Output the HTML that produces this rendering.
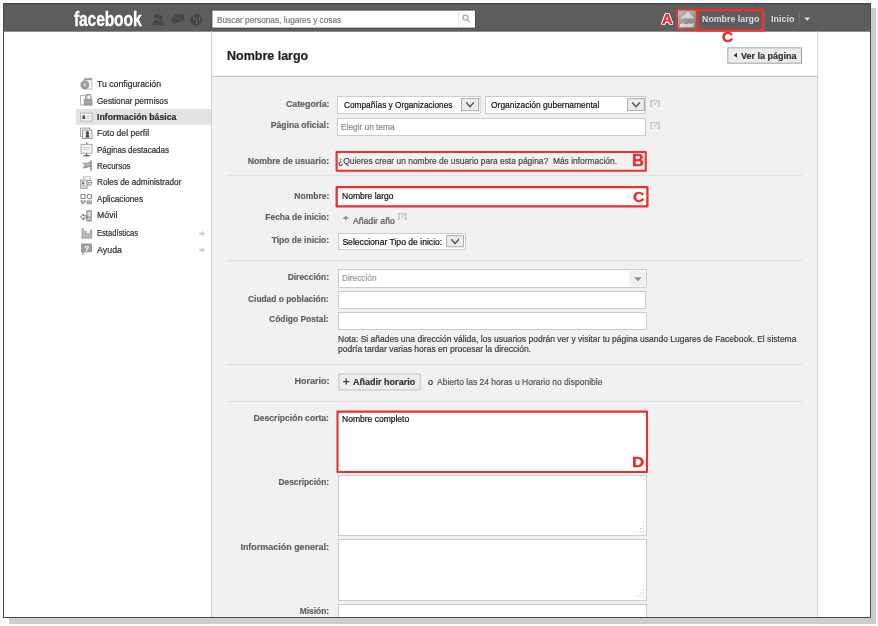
<!DOCTYPE html>
<html lang="es">
<head>
<meta charset="utf-8">
<title>Nombre largo - Información básica</title>
<style>
html,body{margin:0;padding:0;}
body{width:878px;height:626px;overflow:hidden;background:#fbfbfb;position:relative;font-family:"Liberation Sans",sans-serif;}
#shadow{position:absolute;left:9px;top:8px;width:867px;height:616px;background:#cdcdcb;}
#frame{position:absolute;left:3px;top:3px;width:866px;height:613px;border:1px solid #4b4b4b;background:#fff;overflow:hidden;}
#page{position:absolute;left:-4px;top:-4px;width:878px;height:626px;will-change:transform;}
#shapes{position:absolute;left:0;top:0;}
.t{position:absolute;white-space:pre;line-height:12px;height:12px;font-family:"Liberation Sans",sans-serif;-webkit-text-stroke:0.2px currentColor;}
#logo{position:absolute;left:74.4px;top:4.6px;font-weight:bold;color:#fff;font-size:20.8px;line-height:28px;height:28px;white-space:pre;letter-spacing:-0.2px;-webkit-text-stroke:0.35px #fff;transform-origin:0 50%;transform:scaleX(0.752);}
.ann{position:absolute;white-space:pre;font-weight:bold;color:#e62c2c;font-family:"Liberation Sans",sans-serif;transform-origin:0 50%;}
</style>
</head>
<body>
<div id="shadow"></div>
<div id="frame"><div id="page">
<svg id="shapes" width="878" height="626" viewBox="0 0 878 626">
<!-- top bar -->
<rect x="4" y="4" width="867" height="27.7" fill="#5d5d5d"/>
<rect x="4" y="4" width="867" height="1" fill="#565656"/>
<!-- content column -->
<rect x="212" y="76.6" width="606" height="545" fill="#f1f1f1"/>
<rect x="211" y="31.4" width="1" height="590" fill="#cfcfcf"/>
<rect x="817.2" y="31.4" width="1" height="590" fill="#cfcfcf"/>
<rect x="212" y="75.8" width="606" height="1" fill="#bcbcbc"/>
<!-- nav selected -->
<rect x="75.6" y="109" width="135.4" height="15.8" fill="#e3e3e3"/>
<!-- search box -->
<rect x="211.6" y="9.6" width="264.2" height="18.8" fill="#4a4a4a"/>
<rect x="212.4" y="10.6" width="262.6" height="17" fill="#fff"/>
<rect x="458" y="12" width="0.8" height="14" fill="#e3e3e3"/>
<g fill="none" stroke="#a8a8a8" stroke-width="1.3"><circle cx="465.4" cy="17.6" r="2.5"/><path d="M467.3 19.6 L469.8 22"/></g>
<!-- bar dividers -->
<rect x="764.4" y="12" width="0.8" height="14" fill="#727272"/>
<rect x="799" y="12" width="0.8" height="14" fill="#727272"/>
<path d="M804.4 17.6 h5.6 l-2.8 3.1z" fill="#e8e8e8"/>
<!-- jewels -->
<g fill="#454545">
<circle cx="160.500" cy="17.500" r="2.300"/>
<path d="M157.600 25.500 l.8-3.200 q.4-1.700 2.100-2 q1.700.3 2.200 1.600 l1.600 3.600z"/>
<circle cx="156.500" cy="16.400" r="2.700" stroke="#5d5d5d" stroke-width="0.5"/>
<path d="M151.300 25.500 l1.700-3.800 q.8-1.500 3.500-1.800 q2.600.3 3.300 1.800 l1.600 3.800z" stroke="#5d5d5d" stroke-width="0.5"/>
<path d="M174.400 14.200 h9.800 v6.300 h-1.600 l.2 1.800 l-2-1.800 h-6.400z"/>
<path d="M171.200 17.300 h8.900 v5.400 h-4.300 l-2.300 2.600 l.2-2.600 h-2.500z" stroke="#5d5d5d" stroke-width="0.7"/>
<circle cx="196.100" cy="19.800" r="5.800"/>
<path d="M194.600 14.900 q-1.800 2.600.4 4.300 q2.400 1.400 1.200 5" fill="none" stroke="#686868" stroke-width="1.100"/>
<path d="M199.200 16.600 q1.600 1.800.8 4.400 q-1.400-.8-1.600-2.400z" fill="#636363"/>
</g>
<!-- avatar -->
<defs><linearGradient id="avg" x1="0" y1="0" x2="0.6" y2="1"><stop offset="0" stop-color="#bcbcbc"/><stop offset="0.5" stop-color="#a2a2a2"/><stop offset="1" stop-color="#858585"/></linearGradient></defs>
<rect x="678" y="10.100" width="17.800" height="18.400" fill="url(#avg)"/>
<path d="M680 18.600 l8.300-7 l6.100 7z" fill="#d2d2d2"/>
<path d="M684 18.600 h10.400 l-1.600 1.800 l-7 6z" fill="#8e8e8e" opacity="0.6"/>
<!-- header button -->
<rect x="727.400" y="47.400" width="74.600" height="16.200" fill="#979797"/>
<rect x="728.300" y="48.300" width="72.800" height="14.400" fill="#ededed"/>
<path d="M737 52.800 v5 l-3.400-2.500z" fill="#333"/>
<!-- separators -->
<g fill="#dedede">
<rect x="227.400" y="174.800" width="574.600" height="1"/>
<rect x="227.400" y="260.200" width="574.600" height="1"/>
<rect x="227.400" y="364" width="574.600" height="1"/>
<rect x="227.400" y="401" width="574.600" height="1"/>
</g>
<!-- form boxes -->
<g fill="#fff" stroke="#c4c1bf" stroke-width="0.8">
<rect x="337.500" y="96.500" width="142.600" height="17"/>
<rect x="485.500" y="96.500" width="160" height="17"/>
<rect x="337.500" y="118.500" width="308" height="17"/>
<rect x="338.500" y="233.500" width="127" height="16"/>
<rect x="338.500" y="269.500" width="308" height="18"/>
<rect x="338.500" y="291.500" width="307.200" height="17"/>
<rect x="338.500" y="312.600" width="308" height="16.800"/>
<rect x="338.500" y="475.500" width="308" height="60"/>
<rect x="338.500" y="539.500" width="308" height="61"/>
<rect x="338.500" y="604.500" width="308" height="30"/>
</g>
<!-- dropdown buttons -->
<g fill="#ebebeb" stroke="#9c9c9c" stroke-width="0.8">
<rect x="461.500" y="98.500" width="17.200" height="12.200"/>
<rect x="627.500" y="98.700" width="17" height="11.900"/>
<rect x="446.700" y="235.700" width="16.700" height="11.100"/>
</g>
<g fill="none" stroke="#505050" stroke-width="1.400">
<path d="M466.200 102.400 l3.800 4.200 l3.800-4.200"/>
<path d="M632.200 102.500 l3.800 4.200 l3.800-4.200"/>
<path d="M451.300 239.200 l3.800 4.200 l3.800-4.200"/>
</g>
<!-- direccion typeahead button -->
<rect x="629" y="270.400" width="16.600" height="16" fill="#f0f0f0"/>
<path d="M634 277.200 h7.600 l-3.800 4z" fill="#8c8c8c"/>
<!-- añadir horario button -->
<rect x="338.400" y="373.600" width="82.200" height="16.800" fill="#bcbcbc"/>
<rect x="339.300" y="374.500" width="80.400" height="15" fill="#eeeeee"/>
<path d="M343 381.600 h6.400 M346.200 378.600 v6" stroke="#444" stroke-width="1.400" fill="none"/>
<!-- añadir año plus -->
<path d="M343.400 218 h5 M345.900 215.800 v4.400" stroke="#8a8a8a" stroke-width="1.400" fill="none"/>
<!-- textarea grips -->
<g fill="#c6c6c6"><rect x="642.6" y="525" width="1.2" height="1.2"/><rect x="640" y="528" width="1.2" height="1.2"/><rect x="642.6" y="528" width="1.2" height="1.2"/><rect x="636.6" y="531" width="1.2" height="1.2"/><rect x="639.6" y="531" width="1.2" height="1.2"/><rect x="642.6" y="531" width="1.2" height="1.2"/><rect x="642.6" y="589.5" width="1.2" height="1.2"/><rect x="640" y="592.5" width="1.2" height="1.2"/><rect x="642.6" y="592.5" width="1.2" height="1.2"/><rect x="636.6" y="595.5" width="1.2" height="1.2"/><rect x="639.6" y="595.5" width="1.2" height="1.2"/><rect x="642.6" y="595.5" width="1.2" height="1.2"/></g>
<!-- nav arrows -->
<g fill="#cfcfcf">
<path d="M199.400 232.400 h2.600 v-1.800 l3 3 l-3 3 v-1.800 h-2.600z"/>
<path d="M199.400 248.800 h2.600 v-1.800 l3 3 l-3 3 v-1.800 h-2.600z"/>
</g>

<!-- nav icons -->
<g>
<!-- 1 settings: page + gear -->
<rect x="84.500" y="78.600" width="7.400" height="10.400" fill="#fff" stroke="#b5b5b5" stroke-width="0.9"/>
<rect x="84.500" y="78.600" width="7.400" height="1.600" fill="#9a9a9a"/>
<path d="M83.200 80.600 l3.400 0 l2.600 2.500 l0 3.600 l-2.600 2.600 l-3.400 0 l-2.600-2.600 l0-3.600z" fill="#9b9b9b"/>
<circle cx="84.900" cy="84.900" r="1.700" fill="#d0d0d0"/>
<!-- 2 lock -->
<rect x="80.500" y="95.600" width="6.500" height="9.400" fill="#fff" stroke="#b0b0b0" stroke-width="0.9"/>
<path d="M85.600 99.200 v-2 a2.700 2.700 0 0 1 5.400 0 v2" fill="none" stroke="#9a9a9a" stroke-width="1.300"/>
<rect x="83.800" y="98.800" width="8.600" height="6.800" fill="#9c9c9c"/>
<rect x="84.600" y="101.600" width="7" height="0.8" fill="#c8c8c8"/>
<!-- 3 info card -->
<rect x="80.600" y="113.100" width="11.400" height="8" fill="#f7f7f7" stroke="#b0b0b0" stroke-width="0.9"/>
<rect x="82.400" y="115.400" width="2.800" height="3.600" fill="#555"/>
<rect x="86.400" y="116" width="4.200" height="0.8" fill="#c2c2c2"/>
<rect x="86.400" y="118" width="3.200" height="0.8" fill="#c2c2c2"/>
<!-- 4 photo -->
<rect x="80.600" y="128.100" width="9" height="8.400" fill="#fff" stroke="#9a9a9a" stroke-width="0.9"/>
<rect x="82.600" y="130.100" width="9.400" height="8.400" fill="#f4f4f4" stroke="#8e8e8e" stroke-width="0.9"/>
<path d="M85.600 137.400 v-1.600 l1-1 a1.700 1.900 0 1 1 1.600 0 l1 1 v1.600z" fill="#4a4a4a"/>
<!-- 5 board -->
<rect x="86" y="142.600" width="1.200" height="2" fill="#555"/>
<rect x="81" y="144.400" width="11" height="8.800" fill="#f6f6f6" stroke="#a8a8a8" stroke-width="0.9"/>
<rect x="82.800" y="147" width="7.400" height="0.8" fill="#c6c6c6"/>
<rect x="82.800" y="149" width="7.400" height="0.8" fill="#c6c6c6"/>
<rect x="86" y="153.400" width="1.200" height="2" fill="#555"/>
<rect x="83.400" y="155.200" width="6.400" height="1.100" fill="#444"/>
<!-- 6 flag -->
<path d="M90.600 161 L86.600 163.100 L82.400 162.300 L84.300 165.400 L82.400 168.500 L86.600 167.900 L90.600 166.700z" fill="#a0a0a0"/>
<path d="M90.400 162.600 L86.600 164.600 L84.200 164.200 L84.800 165.400 L86.600 165.600 L90.400 164.200z" fill="#c4c4c4"/>
<rect x="90.300" y="160.400" width="1.400" height="10.300" fill="#858585"/>
<!-- 7 roles -->
<rect x="83.500" y="176.900" width="6.400" height="8" fill="#fff" stroke="#b0b0b0" stroke-width="0.9"/>
<rect x="80.700" y="180.100" width="6.400" height="8.200" fill="#ececec" stroke="#949494" stroke-width="0.9"/>
<rect x="82" y="181.800" width="2.200" height="2.600" fill="#7a7a7a"/>
<rect x="82" y="185.600" width="3.800" height="0.8" fill="#9e9e9e"/>
<circle cx="89.300" cy="182.800" r="2.500" fill="#f4f4f4" stroke="#8a8a8a" stroke-width="1"/>
<rect x="88.100" y="182.300" width="2.400" height="1" fill="#6a6a6a"/>
<!-- 8 apps -->
<g fill="#fff" stroke="#8a8a8a" stroke-width="1.100">
<rect x="81" y="194.500" width="4" height="4"/>
<circle cx="89.400" cy="196.400" r="2.200"/>
<rect x="87.100" y="201.100" width="4.200" height="2.600"/>
<path d="M80.900 201 h4.400 l-2.200 2.900z"/>
</g>
<rect x="88.300" y="202" width="1.800" height="0.8" fill="#777"/>
<!-- 9 mobile -->
<rect x="86.400" y="210.200" width="5.400" height="11.200" fill="#939393"/>
<rect x="87.500" y="211.700" width="3.200" height="5" fill="#dedede"/>
<rect x="87.500" y="217.800" width="3.200" height="2.200" fill="#cfcfcf"/>
<path d="M80.500 217 l3-3 v1.900 h3.500 v2.200 h-3.500 v1.900z" fill="#fff" stroke="#5c5c5c" stroke-width="0.9"/>
<!-- 10 stats -->
<g fill="#a9a9a9"><rect x="81.600" y="228.200" width="2.300" height="9.600"/><rect x="84.400" y="230.600" width="2.300" height="7.200"/><rect x="87.200" y="233" width="2.300" height="4.800"/><rect x="89.800" y="229.600" width="2.300" height="8.200"/></g>
<rect x="81.200" y="237.600" width="11" height="0.9" fill="#8c8c8c"/>
<!-- 11 help -->
<path d="M81 243.400 h11 v8.800 h-7.400 l-2.600 3.400 v-3.400 h-1z" fill="#9d9d9d"/>
</g>
<!-- red annotation boxes -->
<g fill="none" stroke="#ea3030" stroke-linejoin="round">
<rect x="676.850" y="9.650" width="20.400" height="20.300" stroke-width="1.700"/>
<rect x="697.300" y="10.050" width="65.450" height="20.200" stroke-width="2.500"/>
<rect x="336.600" y="152.050" width="309.150" height="18.700" stroke-width="2.100"/>
<rect x="336.700" y="187.100" width="310.700" height="19.200" stroke-width="2.300" fill="#fff"/>
<rect x="337.500" y="411.600" width="309.500" height="60.450" stroke-width="2.100" fill="#fff"/>
</g>
</svg>

<div id="logo">facebook</div>
<span class="t" style="top:13.65px;font-size:8.6px;color:#7a7a7a;left:217.00px;transform-origin:0 50%;transform:scaleX(0.9629);">Buscar personas, lugares y cosas</span>
<span class="t" style="top:12.85px;font-size:8.6px;color:#dcdcdc;font-weight:bold;-webkit-text-stroke:0;left:701.60px;transform-origin:0 50%;transform:scaleX(1.0273);">Nombre largo</span>
<span class="t" style="top:12.85px;font-size:8.6px;color:#dcdcdc;font-weight:bold;-webkit-text-stroke:0;left:770.60px;transform-origin:0 50%;transform:scaleX(1.0422);">Inicio</span>
<span class="t" style="top:19.90px;font-size:4.6px;color:#f2f2f2;font-weight:bold;left:680.20px;transform-origin:0 50%;transform:scaleX(0.9181);">abcdef</span>
<span class="t" style="top:50.06px;font-size:12px;color:#222;font-weight:bold;left:226.80px;transform-origin:0 50%;transform:scaleX(1.0408);">Nombre largo</span>
<span class="t" style="top:49.55px;font-size:8.6px;color:#333;font-weight:bold;left:741.00px;transform-origin:0 50%;transform:scaleX(1.0484);">Ver la página</span>
<span class="t" style="top:78.25px;font-size:8.6px;color:#2e2e2e;left:97.00px;transform-origin:0 50%;transform:scaleX(1.0124);">Tu configuración</span>
<span class="t" style="top:94.65px;font-size:8.6px;color:#2e2e2e;left:97.00px;transform-origin:0 50%;transform:scaleX(0.9528);">Gestionar permisos</span>
<span class="t" style="top:111.25px;font-size:8.6px;color:#2e2e2e;font-weight:bold;left:97.00px;transform-origin:0 50%;transform:scaleX(1.0137);">Información básica</span>
<span class="t" style="top:127.45px;font-size:8.6px;color:#2e2e2e;left:97.00px;transform-origin:0 50%;">Foto del perfil</span>
<span class="t" style="top:143.85px;font-size:8.6px;color:#2e2e2e;left:97.00px;transform-origin:0 50%;transform:scaleX(0.9302);">Páginas destacadas</span>
<span class="t" style="top:160.25px;font-size:8.6px;color:#2e2e2e;left:97.00px;transform-origin:0 50%;transform:scaleX(0.9257);">Recursos</span>
<span class="t" style="top:176.15px;font-size:8.6px;color:#2e2e2e;left:97.00px;transform-origin:0 50%;transform:scaleX(0.9550);">Roles de administrador</span>
<span class="t" style="top:193.25px;font-size:8.6px;color:#2e2e2e;left:97.00px;transform-origin:0 50%;transform:scaleX(0.9534);">Aplicaciones</span>
<span class="t" style="top:209.45px;font-size:8.6px;color:#2e2e2e;left:97.00px;transform-origin:0 50%;transform:scaleX(1.0168);">Móvil</span>
<span class="t" style="top:227.35px;font-size:8.6px;color:#2e2e2e;left:97.00px;transform-origin:0 50%;transform:scaleX(0.8847);">Estadísticas</span>
<span class="t" style="top:243.95px;font-size:8.6px;color:#2e2e2e;left:97.00px;transform-origin:0 50%;transform:scaleX(1.0323);">Ayuda</span>
<span class="t" style="top:242.74px;font-size:7.6px;color:#fff;font-weight:bold;left:84.60px;transform-origin:0 50%;">?</span>
<span class="t" style="top:98.05px;font-size:8.6px;color:#636363;font-weight:bold;right:549.00px;transform-origin:100% 50%;transform:scaleX(1.0259);">Categoría:</span>
<span class="t" style="top:119.25px;font-size:8.6px;color:#636363;font-weight:bold;right:549.00px;transform-origin:100% 50%;">Página oficial:</span>
<span class="t" style="top:155.25px;font-size:8.6px;color:#636363;font-weight:bold;right:549.00px;transform-origin:100% 50%;">Nombre de usuario:</span>
<span class="t" style="top:189.95px;font-size:8.6px;color:#636363;font-weight:bold;right:549.00px;transform-origin:100% 50%;transform:scaleX(0.9903);">Nombre:</span>
<span class="t" style="top:211.25px;font-size:8.6px;color:#636363;font-weight:bold;right:549.00px;transform-origin:100% 50%;transform:scaleX(0.9792);">Fecha de inicio:</span>
<span class="t" style="top:234.05px;font-size:8.6px;color:#636363;font-weight:bold;right:549.00px;transform-origin:100% 50%;transform:scaleX(0.9881);">Tipo de inicio:</span>
<span class="t" style="top:271.25px;font-size:8.6px;color:#636363;font-weight:bold;right:549.00px;transform-origin:100% 50%;transform:scaleX(0.9850);">Dirección:</span>
<span class="t" style="top:293.25px;font-size:8.6px;color:#636363;font-weight:bold;right:549.00px;transform-origin:100% 50%;transform:scaleX(0.9759);">Ciudad o población:</span>
<span class="t" style="top:313.05px;font-size:8.6px;color:#636363;font-weight:bold;right:549.00px;transform-origin:100% 50%;transform:scaleX(0.9828);">Código Postal:</span>
<span class="t" style="top:375.25px;font-size:8.6px;color:#636363;font-weight:bold;right:549.00px;transform-origin:100% 50%;transform:scaleX(1.0467);">Horario:</span>
<span class="t" style="top:412.35px;font-size:8.6px;color:#636363;font-weight:bold;right:549.00px;transform-origin:100% 50%;">Descripción corta:</span>
<span class="t" style="top:476.35px;font-size:8.6px;color:#636363;font-weight:bold;right:549.00px;transform-origin:100% 50%;transform:scaleX(0.9719);">Descripción:</span>
<span class="t" style="top:541.25px;font-size:8.6px;color:#636363;font-weight:bold;right:549.00px;transform-origin:100% 50%;transform:scaleX(1.0424);">Información general:</span>
<span class="t" style="top:605.25px;font-size:8.6px;color:#636363;font-weight:bold;right:549.00px;transform-origin:100% 50%;transform:scaleX(0.9775);">Misión:</span>
<span class="t" style="top:98.85px;font-size:8.6px;color:#111;left:343.60px;transform-origin:0 50%;transform:scaleX(0.9616);">Compañías y Organizaciones</span>
<span class="t" style="top:98.85px;font-size:8.6px;color:#111;left:490.60px;transform-origin:0 50%;transform:scaleX(0.9822);">Organización gubernamental</span>
<span class="t" style="top:121.15px;font-size:8.6px;color:#8a8a8a;left:341.40px;transform-origin:0 50%;transform:scaleX(0.9671);">Elegir un tema</span>
<span class="t" style="top:155.25px;font-size:8.6px;color:#484848;left:338.00px;transform-origin:0 50%;transform:scaleX(0.9800);">¿Quieres crear un nombre de usuario para esta página? &nbsp;Más información.</span>
<span class="t" style="top:190.15px;font-size:8.6px;color:#111;left:342.40px;transform-origin:0 50%;transform:scaleX(0.9911);">Nombre largo</span>
<span class="t" style="top:215.25px;font-size:8.6px;color:#555;left:352.60px;transform-origin:0 50%;transform:scaleX(1.0053);">Añadir año</span>
<span class="t" style="top:209.96px;font-size:7.4px;color:#b0b0b0;left:398.00px;transform-origin:0 50%;transform:scaleX(1.0464);">[?]</span>
<span class="t" style="top:96.70px;font-size:8px;color:#b8b8b8;left:650.00px;transform-origin:0 50%;transform:scaleX(1.1228);">[?]</span>
<span class="t" style="top:118.70px;font-size:8px;color:#b8b8b8;left:650.00px;transform-origin:0 50%;transform:scaleX(1.1228);">[?]</span>
<span class="t" style="top:235.65px;font-size:8.6px;color:#111;left:342.40px;transform-origin:0 50%;">Seleccionar Tipo de inicio:</span>
<span class="t" style="top:273.09px;font-size:8.2px;color:#9a9a9a;left:342.40px;transform-origin:0 50%;transform:scaleX(1.0135);">Dirección</span>
<span class="t" style="top:333.15px;font-size:8.6px;color:#3d3d3d;left:338.00px;transform-origin:0 50%;transform:scaleX(0.9893);">Nota: Si añades una dirección válida, los usuarios podrán ver y visitar tu página usando Lugares de Facebook. El sistema</span>
<span class="t" style="top:343.15px;font-size:8.6px;color:#3d3d3d;left:338.00px;transform-origin:0 50%;transform:scaleX(0.9927);">podría tardar varias horas en procesar la dirección.</span>
<span class="t" style="top:375.85px;font-size:8.6px;color:#333;font-weight:bold;left:353.40px;transform-origin:0 50%;transform:scaleX(1.0503);">Añadir horario</span>
<span class="t" style="top:375.85px;font-size:8.6px;color:#333;left:428.40px;transform-origin:0 50%;transform:scaleX(1.0458);">o</span>
<span class="t" style="top:375.85px;font-size:8.6px;color:#555;left:437.00px;transform-origin:0 50%;transform:scaleX(0.9892);">Abierto las 24 horas u Horario no disponible</span>
<span class="t" style="top:413.05px;font-size:8.6px;color:#111;left:342.40px;transform-origin:0 50%;transform:scaleX(0.9907);">Nombre completo</span>
<span class="ann" style="left:661.7px;top:9.1px;font-size:15.2px;line-height:19px;-webkit-text-stroke:0.4px #e62c2c;text-shadow:1.1px 0 0 #fff,-1.1px 0 0 #fff,0 1.1px 0 #fff,0 -1.1px 0 #fff,.8px .8px 0 #fff,-.8px .8px 0 #fff,.8px -.8px 0 #fff,-.8px -.8px 0 #fff;">A</span>
<span class="ann" style="left:722px;top:29.1px;font-size:14px;line-height:16px;-webkit-text-stroke:0.5px #e62c2c;transform:scaleX(1.08);">C</span>
<span class="ann" style="left:632px;top:151.9px;font-size:15.6px;line-height:18px;-webkit-text-stroke:0.35px #e62c2c;transform:scaleX(1.06);">B</span>
<span class="ann" style="left:632.6px;top:187.5px;font-size:15.4px;line-height:18px;-webkit-text-stroke:0.35px #e62c2c;transform:scaleX(1.02);">C</span>
<span class="ann" style="left:632.1px;top:453.4px;font-size:14.6px;line-height:18px;-webkit-text-stroke:0.35px #e62c2c;transform:scaleX(1.16);">D</span>

</div></div>
</body>
</html>
